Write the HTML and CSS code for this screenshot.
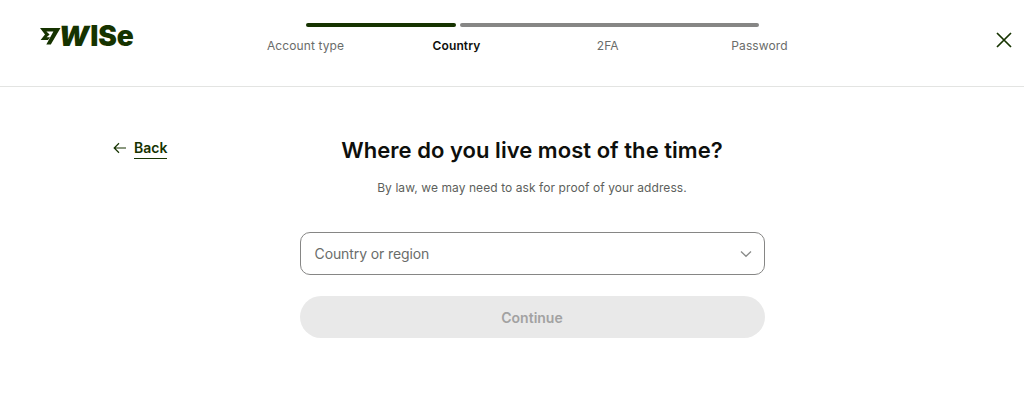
FILE: index.html
```html
<!DOCTYPE html>
<html lang="en">
<head>
<meta charset="utf-8">
<title>Wise - Country</title>
<link rel="stylesheet" href="styles.css">
</head>
<body>
<header class="topbar">
  <a class="logo" href="#">
    <svg class="logo-flag" width="21" height="18" viewBox="0 0 21 18"><path d="M0 1h20.5L10.8 17.5H6.3L13.4 4.4H6.4L9.6 7.6 6.6 10.2H10L8 13H0.6L5 7.6z" fill="#163300"/></svg>
    <span class="logo-text"><span class="logo-w">W</span>ISe</span>
  </a>
  <nav class="stepper">
    <div class="track">
      <span class="seg seg-done"></span>
      <span class="seg seg-todo"></span>
    </div>
    <ol class="labels">
      <li class="label">Account type</li>
      <li class="label label-active">Country</li>
      <li class="label">2FA</li>
      <li class="label">Password</li>
    </ol>
  </nav>
  <button class="close" aria-label="Close">
    <svg width="18" height="18" viewBox="0 0 18 18"><path d="M2 2l14 14M16 2 2 16" stroke="#163300" stroke-width="1.7" fill="none"/></svg>
  </button>
</header>
<main class="page">
  <a class="back" href="#">
    <svg class="back-arrow" width="14" height="12" viewBox="0 0 14 12"><path d="M13 6H1.5M6 1.3 1.2 6 6 10.7" stroke="#163300" stroke-width="1.2" fill="none"/></svg>
    <span class="back-text">Back</span>
  </a>
  <section class="form">
    <h1 class="title">Where do you live most of the time?</h1>
    <p class="sub">By law, we may need to ask for proof of your address.</p>
    <div class="select">
      <span>Country or region</span>
      <svg width="12" height="8" viewBox="0 0 12 8"><path d="M1 1.5 6 6.3l5-4.8" stroke="#8a8c8a" stroke-width="1.3" fill="none"/></svg>
    </div>
    <button class="continue" disabled>Continue</button>
  </section>
</main>
</body>
</html>
```
FILE: styles.css
```css
* { box-sizing: border-box; }
html, body { margin: 0; padding: 0; height: 100%; }
body { background: #fff; font-family: Inter, "Liberation Sans", sans-serif; color: #0e0f0c; overflow: hidden; }

.topbar { height: 87px; border-bottom: 1px solid #e3e4e2; display: flex; align-items: flex-start; position: relative; padding-left: 40px; }
.logo { display: flex; align-items: flex-start; margin-top: 21px; text-decoration: none; color: #163300; width: 191px; }
.logo-flag { flex: none; margin-top: 6px; margin-right: -2px; }
.logo-text { font-size: 28px; line-height: 30px; font-weight: 900; letter-spacing: -0.1px; }
.logo-w { display: inline-block; transform: skewX(-10deg); margin-right: 1px; }

.stepper { width: 604px; margin-top: 23px; }
.track { display: flex; gap: 4px; margin: 0 76px 0 75px; height: 4px; }
.seg { display: block; height: 4px; border-radius: 2px; }
.seg-done { width: 150px; background: #163300; }
.seg-todo { flex: 1; background: #868685; }
.labels { list-style: none; margin: 10px 0 0 -1px; padding: 0; display: grid; grid-template-columns: 151px 151px 151.5px 152px; }
.label { text-align: center; font-size: 12px; line-height: 18px; letter-spacing: 0.1px; color: #6a6c6a; }
.label-active { font-weight: 600; color: #0e0f0c; }

.close { position: absolute; right: 11px; top: 31px; padding: 0; border: 0; background: none; display: flex; }

.page { position: relative; display: flex; justify-content: center; padding-left: 40px; }
.back { position: absolute; left: 113px; top: 52px; display: flex; align-items: center; gap: 7px; text-decoration: none; color: #163300; }
.back-arrow { margin-top: -3px; }
.back-text { font-size: 14px; line-height: 17px; font-weight: 600; border-bottom: 1px solid #163300; padding-bottom: 2px; }

.form { width: 465px; display: flex; flex-direction: column; align-items: center; }
.title { margin: 47px -30px 0; font-size: 22px; line-height: 32px; font-weight: 600; white-space: nowrap; letter-spacing: 0.04px; }
.sub { margin: 13px 0 0; font-size: 12px; line-height: 18px; letter-spacing: 0.08px; color: #5d5f5c; }
.select { width: 100%; height: 43px; margin-top: 35px; padding: 0 12px 0 14px; display: flex; justify-content: space-between; align-items: center; border: 1px solid #868685; border-radius: 10px; font-size: 14px; letter-spacing: -0.1px; color: #6a6c6a; }
.continue { width: 100%; height: 42px; margin-top: 21px; padding: 2px 0 0; border: 0; border-radius: 21px; background: #e9e9e9; color: #a2a2a2; font: 600 14px/20px Inter, "Liberation Sans", sans-serif; }
```
